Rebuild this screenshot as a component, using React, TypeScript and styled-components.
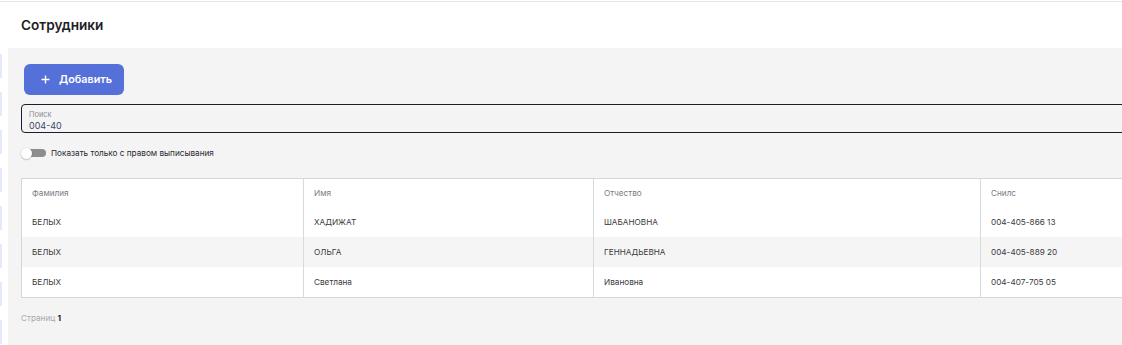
import React from "react";
import styled, { createGlobalStyle } from "styled-components";

const Global = createGlobalStyle`
  html, body { margin: 0; padding: 0; background: #ffffff; overflow: hidden; }
  body { font-family: Inter, "Noto Sans", sans-serif; width: 1122px; height: 345px; }
  * { box-sizing: border-box; }
`;

const Page = styled.div`
  width: 1200px;
  height: 345px;
  display: flex;
  flex-direction: column;
  padding-top: 1px;
`;

const Header = styled.header`
  height: 47px;
  border-top: 1px solid #e6e6e6;
  background: #fff;
  display: flex;
  align-items: center;
  padding-left: 21px;
  padding-bottom: 1px;
`;

const Title = styled.h1`
  margin: 0;
  font-size: 13.6px;
  font-weight: 600;
  color: #1d1d24;
`;

const Body = styled.div`
  flex: 1;
  display: flex;
`;

const Sidebar = styled.nav`
  width: 8px;
  background: #fff;
  display: flex;
  flex-direction: column;
  gap: 14px;
  padding-top: 6px;
`;

const NavItem = styled.div`
  height: 24px;
  width: 2px;
  background: #e4e9fb;
`;

const Content = styled.main`
  flex: 1;
  background: #f4f4f4;
  padding: 16px 0 0 13px;
  display: flex;
  flex-direction: column;
`;

const AddButton = styled.button`
  align-self: flex-start;
  margin-left: 3px;
  height: 31px;
  width: 100px;
  border: none;
  border-radius: 6px;
  background: #5570d8;
  color: #fff;
  font-family: inherit;
  font-size: 10.8px;
  font-weight: 600;
  display: flex;
  align-items: center;
  padding-left: 17px;
  gap: 9px;
  cursor: pointer;
`;

const SearchBox = styled.div`
  margin-top: 9px;
  width: 1160px;
  height: 29px;
  border: 1px solid #1e1e2e;
  border-radius: 4px;
  padding: 5px 0 0 7px;
  display: flex;
  flex-direction: column;
`;

const SearchLabel = styled.span`
  font-size: 7.4px;
  color: #8c8c96;
  line-height: 9px;
`;

const SearchValue = styled.span`
  font-size: 9px;
  color: #3b4766;
  line-height: 12px;
  margin-top: 1px;
`;

const ToggleRow = styled.label`
  margin-top: 14px;
  display: flex;
  align-items: center;
  gap: 5px;
  height: 12px;
`;

const Switch = styled.span`
  position: relative;
  width: 25px;
  height: 11px;
  display: inline-block;
`;

const Track = styled.span`
  position: absolute;
  left: 5px;
  right: 0;
  top: 1.5px;
  height: 8px;
  border-radius: 4px;
  background: #8d8d8d;
`;

const Knob = styled.span`
  position: absolute;
  left: 0;
  top: 0;
  width: 11px;
  height: 11px;
  border-radius: 50%;
  background: #fff;
  box-shadow: 0 0.5px 1.5px rgba(0, 0, 0, 0.35);
`;

const ToggleText = styled.span`
  font-size: 8.2px;
  color: #2a2a30;
`;

const Table = styled.div`
  margin-top: 19px;
  width: 1160px;
  border: 1px solid #d6d6d6;
  background: #fff;
`;

const Row = styled.div<{ $striped?: boolean; $head?: boolean }>`
  display: grid;
  grid-template-columns: 282px 290px 387px 1fr;
  height: ${(p) => (p.$head ? 28 : 30)}px;
  background: ${(p) => (p.$striped ? "#f5f5f5" : "#fff")};
`;

const Cell = styled.div<{ $head?: boolean }>`
  display: flex;
  align-items: center;
  padding-left: 10px;
  font-size: 8.2px;
  color: ${(p) => (p.$head ? "#7a7a82" : "#3a3a40")};
  border-right: 1px solid #dadada;
  &:last-child { border-right: none; }
`;

const Pager = styled.div`
  margin-top: 15px;
  font-size: 8.2px;
  color: #a9a9ae;
`;

const PageNum = styled.span`
  color: #1f1f33;
  font-weight: 700;
`;

const rows = [
  ["БЕЛЫХ", "ХАДИЖАТ", "ШАБАНОВНА", "004-405-866 13"],
  ["БЕЛЫХ", "ОЛЬГА", "ГЕННАДЬЕВНА", "004-405-889 20"],
  ["БЕЛЫХ", "Светлана", "Ивановна", "004-407-705 05"],
];

export default function App() {
  return (
    <>
      <Global />
      <Page>
        <Header>
          <Title>Сотрудники</Title>
        </Header>
        <Body>
          <Sidebar>
            {Array.from({ length: 8 }).map((_, i) => (
              <NavItem key={i} />
            ))}
          </Sidebar>
          <Content>
            <AddButton>
              <svg width="9" height="9" viewBox="0 0 9 9">
                <path d="M4.5 0.5v8M0.5 4.5h8" stroke="#fff" strokeWidth="1.4" />
              </svg>
              Добавить
            </AddButton>
            <SearchBox>
              <SearchLabel>Поиск</SearchLabel>
              <SearchValue>004-40</SearchValue>
            </SearchBox>
            <ToggleRow>
              <Switch>
                <Track />
                <Knob />
              </Switch>
              <ToggleText>Показать только с правом выписывания</ToggleText>
            </ToggleRow>
            <Table>
              <Row $head>
                <Cell $head>Фамилия</Cell>
                <Cell $head>Имя</Cell>
                <Cell $head>Отчество</Cell>
                <Cell $head>Снилс</Cell>
              </Row>
              {rows.map((r, i) => (
                <Row key={i} $striped={i === 1}>
                  {r.map((c, j) => (
                    <Cell key={j}>{c}</Cell>
                  ))}
                </Row>
              ))}
            </Table>
            <Pager>
              Страниц <PageNum>1</PageNum>
            </Pager>
          </Content>
        </Body>
      </Page>
    </>
  );
}
